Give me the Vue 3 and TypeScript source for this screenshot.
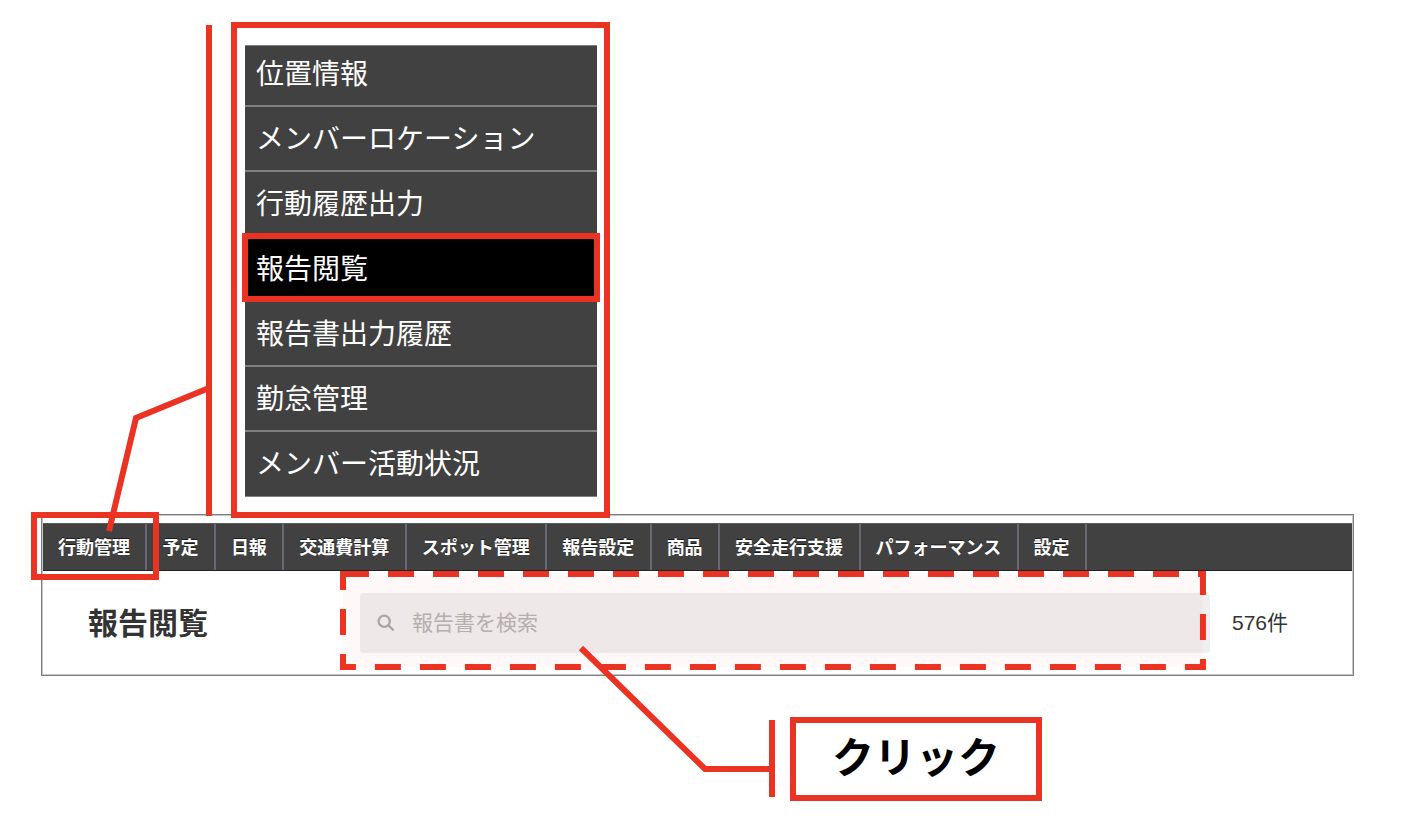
<script setup lang="ts">
import { ref } from 'vue'

interface MenuEntry {
  label: string
  current?: boolean
}

const menu: MenuEntry[] = [
  { label: '位置情報' },
  { label: 'メンバーロケーション' },
  { label: '行動履歴出力' },
  { label: '報告閲覧', current: true },
  { label: '報告書出力履歴' },
  { label: '勤怠管理' },
  { label: 'メンバー活動状況' },
]

const tabs: string[] = [
  '行動管理',
  '予定',
  '日報',
  '交通費計算',
  'スポット管理',
  '報告設定',
  '商品',
  '安全走行支援',
  'パフォーマンス',
  '設定',
]

const keyword = ref('')
const count = ref(576)
</script>

<template>
  <main class="guide">
    <nav class="menu" aria-label="行動管理">
      <ul class="menu-list">
        <li v-for="entry in menu" :key="entry.label" class="menu-item" :class="{ current: entry.current }">
          <a href="#" class="menu-link" :aria-current="entry.current ? 'page' : undefined">{{ entry.label }}</a>
        </li>
      </ul>
    </nav>

    <section class="panel">
      <nav class="bar">
        <ul class="tabs">
          <li v-for="(tab, i) in tabs" :key="tab" class="tab" :class="{ marked: i === 0 }">
            <a href="#" class="tab-link">{{ tab }}</a>
          </li>
        </ul>
      </nav>
      <div class="row">
        <h1 class="title">報告閲覧</h1>
        <div class="search">
          <label class="search-box">
            <svg class="search-icon" viewBox="0 0 18 18" aria-hidden="true">
              <circle cx="7.2" cy="7.2" r="5.6" />
              <path d="M11.2 11.2L16.6 16.4" />
            </svg>
            <input v-model="keyword" class="search-input" type="text" placeholder="報告書を検索" aria-label="報告書を検索" />
          </label>
          <svg class="dashes" aria-hidden="true">
            <rect class="dash-corner" width="6" height="6" />
            <rect class="dash-frame" x="3" y="3" />
          </svg>
        </div>
        <p class="count">{{ count }}件</p>
      </div>
    </section>

    <p class="callout">クリック</p>

    <svg class="leaders" aria-hidden="true">
      <path d="M209 25V516" />
      <path d="M109 531L136 418L209 388" />
      <path d="M581 648L705 769H772" />
      <path d="M772 720V797" />
    </svg>
  </main>
</template>

<style>
body {
  margin: 0;
  background: #fff;
}
</style>

<style scoped>
.guide {
  position: relative;
  box-sizing: border-box;
  min-height: 100vh;
  padding: 22px 54px 19px 41px;
  font-family: "Liberation Sans", "Noto Sans CJK JP", sans-serif;
  color: #333;
}

ul {
  margin: 0;
  padding: 0;
  list-style: none;
}

a {
  color: #fff;
  text-decoration: none;
}

.menu {
  position: relative;
  z-index: 1;
  box-sizing: border-box;
  width: 379px;
  margin-left: 190px;
  padding: 17px 7px 15px 8px;
  border: 6px solid #eb3323;
}

.menu-list {
  border-top: 1px solid #808080;
  border-bottom: 1px solid #808080;
}

.menu-item {
  position: relative;
  padding: 12px 11px 10px;
  border-bottom: 2px solid #808080;
  background: #414141;
  font-size: 28px;
  line-height: 41px;
}

.menu-item:first-child {
  padding-top: 8px;
}

.menu-item:last-child {
  padding-bottom: 11px;
  border-bottom: 0;
}

.menu-item.current {
  background: #000;
}

.menu-item.current::after {
  content: "";
  position: absolute;
  inset: -4px -3px -2px -3px;
  border: 6px solid #eb3323;
  pointer-events: none;
}

.menu-link {
  display: block;
}

.panel {
  margin-top: -4px;
  padding: 8px 1px 0;
  border: 1px solid #808080;
  box-shadow: inset 0 0 0 1px #c4c4c4;
}

.bar {
  box-sizing: border-box;
  height: 48px;
  border-top: 1px solid #5c5c5c;
  border-bottom: 1px solid #222;
  background: #414141;
}

.tabs {
  display: flex;
  width: calc(100% - 265px);
  min-width: max-content;
}

.tab {
  position: relative;
  flex: 1 0 auto;
  box-sizing: border-box;
  padding: 2px 15px 0;
  border-right: 2px solid #686874;
  font-size: 18px;
  font-weight: 700;
  line-height: 44px;
  white-space: nowrap;
}

.tab-link {
  display: block;
  text-shadow: 0 -1px 0 #1c1c1c;
}

.tab.marked::after {
  content: "";
  position: absolute;
  inset: -12px -14px -10px -12px;
  border: 6px solid #eb3323;
  pointer-events: none;
}

.row {
  display: flex;
  align-items: center;
  padding: 22px 64px 22px 45px;
}

.title {
  margin: 0;
  padding-top: 2px;
  font-size: 30px;
  font-weight: 700;
  line-height: 44px;
  color: #333;
}

.search {
  position: relative;
  flex: 1;
  min-width: 0;
  margin-left: 152px;
}

.search-box {
  display: flex;
  align-items: center;
  gap: 17px;
  height: 60px;
  padding: 0 17px;
  border-radius: 4px;
  background: #efefef;
}

.search-icon {
  flex: none;
  width: 18px;
  height: 18px;
  fill: none;
  stroke: #aaa;
  stroke-width: 2.3;
}

.search-input {
  flex: 1;
  min-width: 0;
  padding: 0;
  border: 0;
  outline: 0;
  background: transparent;
  font: 21px/30px "Liberation Sans", "Noto Sans CJK JP", sans-serif;
  color: #333;
}

.search-input::placeholder {
  color: #b4b4b4;
  opacity: 1;
}

.dashes {
  position: absolute;
  top: -22px;
  left: -20px;
  width: calc(100% + 16px);
  height: calc(100% + 39px);
  pointer-events: none;
}

.dash-corner {
  fill: #eb3323;
}

.dash-frame {
  width: calc(100% - 6px);
  height: calc(100% - 6px);
  fill: rgb(255 0 0 / 2.7%);
  stroke: #eb3323;
  stroke-width: 6;
  stroke-dasharray: 26 19;
}

.count {
  margin: 0 0 0 22px;
  font-size: 21px;
  line-height: 30px;
  white-space: nowrap;
}

.callout {
  box-sizing: border-box;
  width: 252px;
  margin: 41px 0 0 749px;
  border: 6px solid #eb3323;
  font-size: 42px;
  font-weight: 700;
  line-height: 72px;
  text-align: center;
  color: #000;
}

.leaders {
  position: absolute;
  top: 0;
  left: 0;
  z-index: 2;
  width: 100%;
  height: 100%;
  fill: none;
  stroke: #eb3323;
  stroke-width: 6;
  pointer-events: none;
}
</style>
